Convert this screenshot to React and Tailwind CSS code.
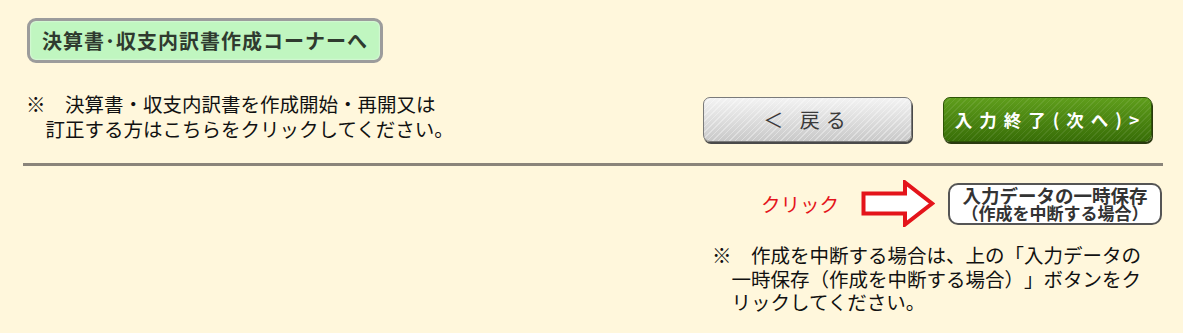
import React from 'react'

function Arrow() {
  return (
    <svg width="74" height="47" viewBox="0 0 74 47" className="block">
      <path
        d="M2.5 13.5 H44 V2.5 L71 23.5 L44 44.5 V33.5 H2.5 Z"
        fill="#ffffff"
        stroke="#e4141b"
        strokeWidth="4"
        strokeLinejoin="miter"
      />
    </svg>
  )
}

function App() {
  return (
    <div
      className="w-[1183px] h-[333px] bg-[#fff7dc] text-[#111] overflow-hidden [text-spacing-trim:space-all]"
      style={{ fontFamily: '"Noto Sans CJK JP", "Noto Sans", sans-serif' }}
    >
      {/* top green button */}
      <div className="pt-[18px] pl-[27px]">
        <button className="w-[356px] h-[45px] rounded-[9px] border-[3px] border-[#9c9c9c] bg-[#c0f6c0] shadow-[inset_0_0_2px_#ffffff] text-[#2f3a2f] font-bold text-[20px] tracking-[1px] flex items-center justify-center leading-none">
          決算書･収支内訳書作成コーナーへ
        </button>
      </div>

      {/* notice + navigation */}
      <div className="mt-[28px] flex items-start justify-between pl-[26px] pr-[31px]">
        <p className="text-[19.5px] leading-[25px] pl-[1em] -indent-[1em]">
          ※　決算書・収支内訳書を作成開始・再開又は
          <br />
          訂正する方はこちらをクリックしてください。
        </p>
        <div className="mt-[6px] flex gap-[31px]">
          <button className="w-[209px] h-[45px] rounded-[7px] border border-[#7a7a7a] shadow-[1px_2px_0_#4a4a4a] bg-[repeating-linear-gradient(135deg,rgba(255,255,255,0.35)_0_1px,transparent_1px_4px),linear-gradient(#f3f3f3,#c9c9c9)] text-[#3a3a3a] text-[20px] tracking-[6px] flex items-center justify-center leading-none">
            ＜ 戻る
          </button>
          <button className="w-[209px] h-[45px] rounded-[7px] border border-[#2d5406] shadow-[1px_2px_0_#2a3a10] bg-[repeating-linear-gradient(135deg,rgba(255,255,255,0.08)_0_1px,transparent_1px_4px),linear-gradient(#5f9e1c,#386e07)] text-white font-bold text-[17.5px] tracking-[7px] pl-[6px] flex items-center justify-center leading-none">
            入力終了(次へ)&gt;
          </button>
        </div>
      </div>

      {/* divider */}
      <div className="mt-[21px] ml-[23px] mr-[20px] h-[3px] bg-[#8a847a]" />

      {/* temporary save */}
      <div className="mt-[14px] flex items-center justify-end pr-[21px]">
        <span className="text-[19.5px] text-[#e4141b] leading-none mr-[22px]">クリック</span>
        <div className="mr-[13px]">
          <Arrow />
        </div>
        <button className="w-[214px] h-[42px] rounded-[10px] border-2 border-[#555555] bg-white text-[#333333] font-bold flex flex-col items-center justify-center">
          <span className="text-[18.5px] leading-[17px]">入力データの一時保存</span>
          <span className="text-[17px] leading-[17px]">（作成を中断する場合）</span>
        </button>
      </div>

      {/* bottom notice */}
      <div className="mt-[16px] flex justify-end pr-[42px]">
        <p className="w-[429px] text-[19.5px] leading-[23.5px] pl-[1em] -indent-[1em]">
          ※　作成を中断する場合は、上の「入力データの
          <br />
          一時保存（作成を中断する場合）」ボタンをク
          <br />
          リックしてください。
        </p>
      </div>
    </div>
  )
}

export default App
